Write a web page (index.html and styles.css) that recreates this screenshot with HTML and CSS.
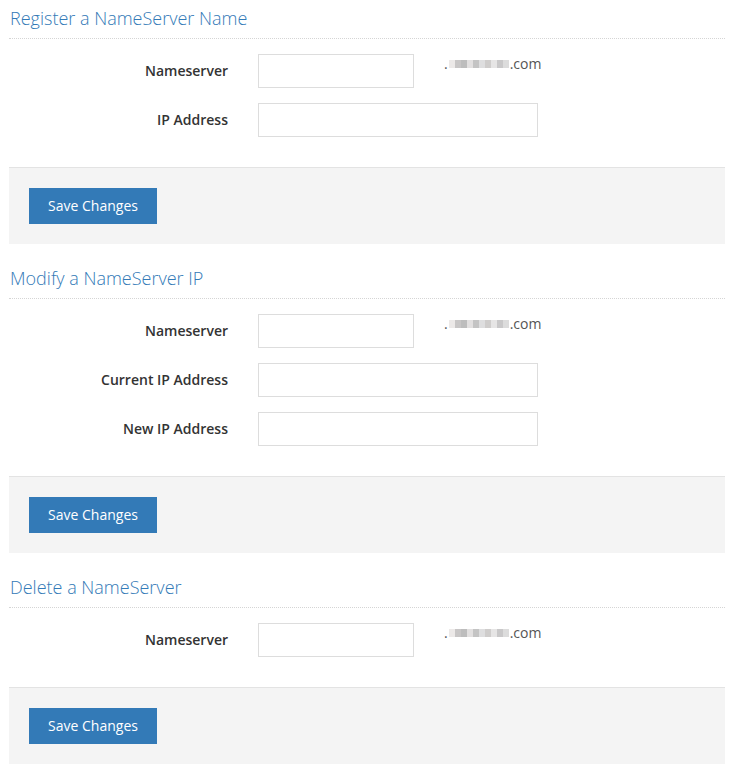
FILE: index.html
```html
<!DOCTYPE html>
<html>
<head>
<meta charset="utf-8">
<link rel="stylesheet" href="styles.css">
</head>
<body>
<div class="page">
  <section class="block">
    <h2 class="title">Register a NameServer Name</h2>
    <div class="fields">
      <div class="row">
        <label class="label">Nameserver</label>
        <input class="input short" type="text">
        <span class="suffix">.<span class="blur"></span>.com</span>
      </div>
      <div class="row">
        <label class="label">IP Address</label>
        <input class="input long" type="text">
      </div>
    </div>
    <div class="actions"><button class="btn">Save Changes</button></div>
  </section>

  <section class="block">
    <h2 class="title">Modify a NameServer IP</h2>
    <div class="fields">
      <div class="row">
        <label class="label">Nameserver</label>
        <input class="input short" type="text">
        <span class="suffix">.<span class="blur"></span>.com</span>
      </div>
      <div class="row">
        <label class="label">Current IP Address</label>
        <input class="input long" type="text">
      </div>
      <div class="row">
        <label class="label">New IP Address</label>
        <input class="input long" type="text">
      </div>
    </div>
    <div class="actions"><button class="btn">Save Changes</button></div>
  </section>

  <section class="block">
    <h2 class="title">Delete a NameServer</h2>
    <div class="fields">
      <div class="row">
        <label class="label">Nameserver</label>
        <input class="input short" type="text">
        <span class="suffix">.<span class="blur"></span>.com</span>
      </div>
    </div>
    <div class="actions"><button class="btn">Save Changes</button></div>
  </section>
</div>
</body>
</html>
```
FILE: styles.css
```css
html, body {
  margin: 0;
  padding: 0;
  background: #fff;
}
body {
  font-family: "Open Sans", "Liberation Sans", sans-serif;
  font-size: 14px;
  color: #333;
}
.page {
  width: 716px;
  margin-left: 9px;
}
.block {
  margin-bottom: 16px;
}
.title {
  margin: 0;
  height: 39px;
  box-sizing: border-box;
  padding: 6px 0 0 1px;
  font-size: 18px;
  line-height: 24px;
  font-weight: 300;
  color: #337ab7;
  border-bottom: 1px dotted #d5d5d5;
}
.fields {
  padding: 15px 0 30px;
  display: flex;
  flex-direction: column;
  gap: 15px;
}
.row {
  display: flex;
  align-items: center;
}
.label {
  width: 219px;
  text-align: right;
  font-weight: 600;
  color: #333;
  margin-right: 30px;
  padding-bottom: 2px;
}
.input {
  box-sizing: border-box;
  height: 34px;
  border: 1px solid #ddd;
  background: #fff;
  margin: 0;
  padding: 6px 12px;
  font: inherit;
}
.short { width: 156px; }
.long { width: 280px; }
.suffix {
  align-self: flex-start;
  margin-left: 30px;
  line-height: 20px;
  color: #555;
}
.blur {
  display: inline-block;
  width: 60px;
  height: 8px;
  margin: 0 1px;
  vertical-align: 1px;
  background:
    linear-gradient(90deg,
      #ece9e8 0 6px, #c8c6c6 6px 12px, #bdbdbd 12px 18px, #e2e0e0 18px 24px,
      #c4c4c4 24px 30px, #dededf 30px 36px, #cfcdcc 36px 42px, #e6e5e5 42px 48px,
      #c9c8c9 48px 54px, #dcdcdc 54px 60px);
}
.actions {
  background: #f4f4f4;
  border-top: 1px solid #e3e3e3;
  padding: 20px;
}
.btn {
  display: block;
  box-sizing: border-box;
  width: 128px;
  height: 36px;
  border: 0;
  border-radius: 0;
  background: #337ab7;
  color: #fff;
  font-family: "Open Sans", "Liberation Sans", sans-serif;
  font-size: 14px;
  padding: 0 0 2px;
  cursor: pointer;
}
```
